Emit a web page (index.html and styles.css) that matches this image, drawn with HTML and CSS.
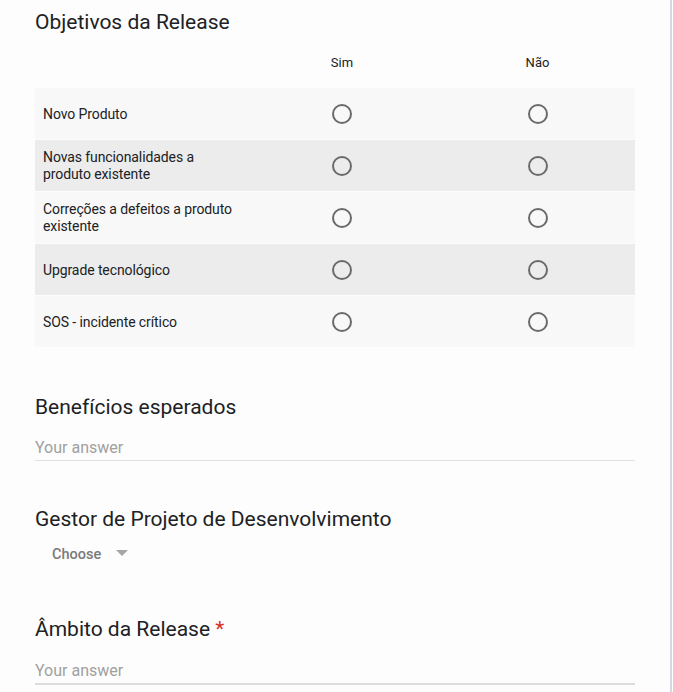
FILE: index.html
```html
<!DOCTYPE html>
<html lang="pt">
<head>
<meta charset="utf-8">
<title>Formulário</title>
<link rel="stylesheet" href="styles.css">
</head>
<body>
<div class="page">
  <main class="form">
    <section class="question q-grid">
      <h2 class="q-title">Objetivos da Release</h2>
      <div class="grid">
        <div class="grid-head">
          <div class="g-label"></div>
          <div class="g-col">Sim</div>
          <div class="g-col">Não</div>
        </div>
        <div class="g-row light">
          <div class="g-label">Novo Produto</div>
          <div class="g-col"><span class="radio"></span></div>
          <div class="g-col"><span class="radio"></span></div>
        </div>
        <div class="g-row dark">
          <div class="g-label">Novas funcionalidades a produto existente</div>
          <div class="g-col"><span class="radio"></span></div>
          <div class="g-col"><span class="radio"></span></div>
        </div>
        <div class="g-row light">
          <div class="g-label">Correções a defeitos a produto existente</div>
          <div class="g-col"><span class="radio"></span></div>
          <div class="g-col"><span class="radio"></span></div>
        </div>
        <div class="g-row dark">
          <div class="g-label">Upgrade tecnológico</div>
          <div class="g-col"><span class="radio"></span></div>
          <div class="g-col"><span class="radio"></span></div>
        </div>
        <div class="g-row light">
          <div class="g-label">SOS - incidente crítico</div>
          <div class="g-col"><span class="radio"></span></div>
          <div class="g-col"><span class="radio"></span></div>
        </div>
      </div>
    </section>

    <section class="question q-text">
      <h2 class="q-title">Benefícios esperados</h2>
      <div class="answer">Your answer</div>
    </section>

    <section class="question q-select">
      <h2 class="q-title">Gestor de Projeto de Desenvolvimento</h2>
      <div class="select"><span class="select-text">Choose</span><span class="caret"></span></div>
    </section>

    <section class="question q-text q-last">
      <h2 class="q-title">Âmbito da Release <span class="req">*</span></h2>
      <div class="answer answer-strong">Your answer</div>
    </section>
  </main>
  <div class="edge"></div>
</div>
</body>
</html>
```

FILE: styles.css
```css
html, body {
  margin: 0;
  padding: 0;
  background: #ffffff;
}

body {
  font-family: Roboto, "Liberation Sans", Arial, sans-serif;
  color: #202124;
  overflow: hidden;
}

.page {
  display: flex;
  height: 692px;
  background: #fdfdfd;
}

.form {
  width: 600px;
  padding-left: 35px;
  flex: none;
}

.edge {
  margin-left: 35px;
  width: 2px;
  background: #d9d5e5;
  flex: none;
}

.q-title {
  margin: 0;
  font-size: 21px;
  line-height: 24px;
  font-weight: 400;
  color: #202124;
}

.q-grid {
  padding-top: 10px;
}

.grid {
  display: flex;
  flex-direction: column;
  gap: 1px;
}

.grid-head,
.g-row {
  display: grid;
  grid-template-columns: 209px 196px 195px;
  align-items: center;
}

.grid-head {
  height: 53px;
  font-size: 13px;
  padding-top: 3px;
  box-sizing: border-box;
  color: #202124;
}

.g-row {
  height: 51px;
}

.g-row.light {
  background: #f8f8f8;
}

.g-row.dark {
  background: #ececec;
}

.g-label {
  padding: 0 2px 0 8px;
  font-size: 14px;
  line-height: 17px;
  letter-spacing: -0.1px;
}

.g-row .g-label {
  padding-top: 1px;
}

.g-col {
  display: flex;
  justify-content: center;
  align-items: center;
}

.radio {
  width: 16px;
  height: 16px;
  border: 2px solid #6b6b6b;
  border-radius: 50%;
  display: block;
}

.q-text .q-title {
  margin-top: 48px;
}

.answer {
  margin-top: 18px;
  font-size: 16px;
  line-height: 22px;
  padding-bottom: 1px;
  color: #a0a0a0;
  border-bottom: 1px solid #e0e0e0;
}

.answer-strong {
  margin-top: 19px;
  border-bottom: 2px solid #dcdcdc;
}

.q-select .q-title {
  margin-top: 46px;
}

.select {
  margin-top: 13px;
  padding-left: 17px;
  display: flex;
  align-items: center;
  height: 20px;
}

.select-text {
  font-size: 14.5px;
  font-weight: 500;
  color: #7a7a7a;
}

.caret {
  margin-left: 15px;
  width: 0;
  height: 0;
  border-left: 6px solid transparent;
  border-right: 6px solid transparent;
  border-top: 6px solid #a6a6a6;
  margin-top: -2px;
}

.q-last .q-title {
  margin-top: 53px;
}

.req {
  color: #d93025;
}
```
